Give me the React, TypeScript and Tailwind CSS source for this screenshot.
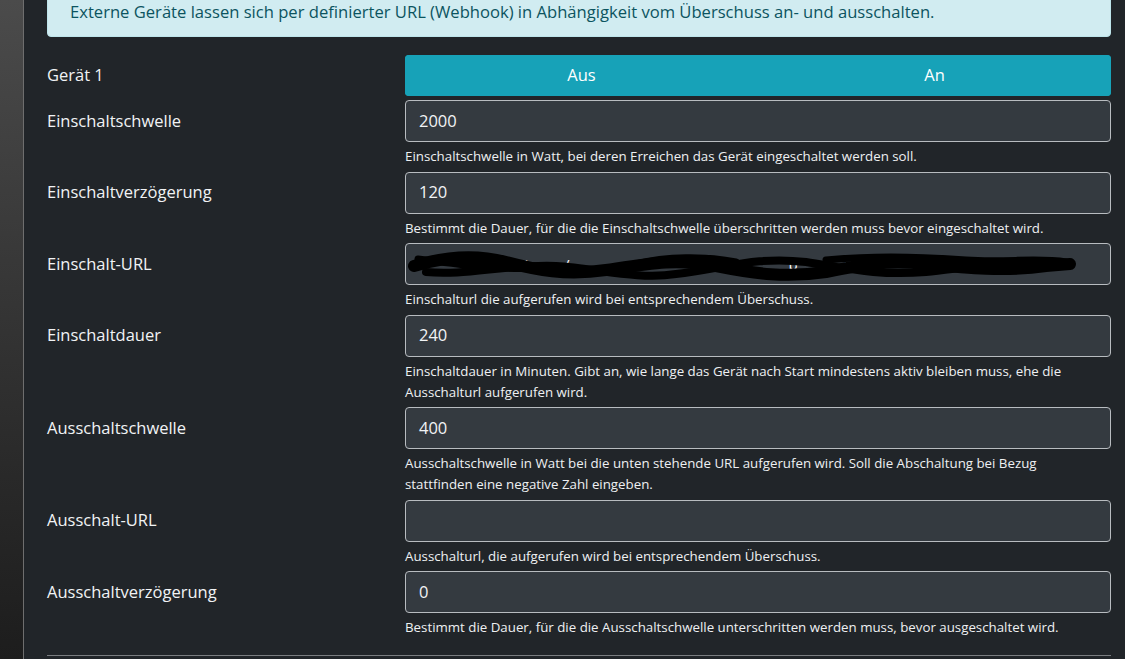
import React from 'react';

interface FieldProps {
  label: string;
  value?: string;
  help: string;
  redacted?: boolean;
}

const Scribble: React.FC = () => (
  <svg
    className="absolute left-0 top-0 pointer-events-none"
    width="700"
    height="42"
    viewBox="0 0 700 42"
  >
    <path
      d="M8 22 C40 12 70 10 100 18 C130 26 160 32 200 26 C240 20 270 14 310 22 C350 30 380 34 420 28 C460 20 480 16 520 20 C560 24 600 28 640 22 L664 20"
      fill="none"
      stroke="#000"
      strokeWidth="12"
      strokeLinecap="round"
    />
    <path
      d="M20 28 C60 32 100 20 150 22 C190 24 230 36 270 30 C320 24 350 12 400 18 C440 24 470 32 520 28 C560 24 600 16 650 20"
      fill="none"
      stroke="#000"
      strokeWidth="8"
      strokeLinecap="round"
    />
    <path
      d="M12 15 C50 20 90 26 130 24 M230 20 C260 12 300 12 330 18 M420 16 C470 11 520 13 560 16 C600 19 630 13 660 18"
      fill="none"
      stroke="#000"
      strokeWidth="7"
      strokeLinecap="round"
    />
  </svg>
);

const Field: React.FC<FieldProps> = ({ label, value, help, redacted }) => {
  return (
    <div className="grid grid-cols-[358px_1fr] mb-[4.5px]">
      <div className="h-[42px] flex items-center text-[16.5px] text-[#f1f3f5]">{label}</div>
      <div>
        <div className="relative h-[42px] rounded-[4px] border border-[#b8bcc0] bg-[#343a40] px-[13px] flex items-center text-[16.5px] text-[#f1f3f5] overflow-hidden">
          {redacted ? (
            <>
              <span className="whitespace-nowrap text-[15px] tracking-[6px] text-white">
                h&nbsp;&nbsp;&nbsp;f&nbsp;&nbsp;&nbsp;&nbsp;&nbsp;i&nbsp;&nbsp;&nbsp;/&nbsp;&nbsp;&nbsp;&nbsp;=&nbsp;&nbsp;&nbsp;&nbsp;&nbsp;&nbsp;(&nbsp;&nbsp;&nbsp;&nbsp;&nbsp;&nbsp;&nbsp;&nbsp;&nbsp;p&nbsp;&nbsp;&nbsp;&nbsp;)
              </span>
              <Scribble />
            </>
          ) : (
            value
          )}
        </div>
        <p className="mt-1 pr-[12px] text-[13.3px] leading-[21px] text-[#eef0f2]">{help}</p>
      </div>
    </div>
  );
};

const fields: FieldProps[] = [
  {
    label: 'Einschaltschwelle',
    value: '2000',
    help: 'Einschaltschwelle in Watt, bei deren Erreichen das Gerät eingeschaltet werden soll.',
  },
  {
    label: 'Einschaltverzögerung',
    value: '120',
    help: 'Bestimmt die Dauer, für die die Einschaltschwelle überschritten werden muss bevor eingeschaltet wird.',
  },
  {
    label: 'Einschalt-URL',
    redacted: true,
    help: 'Einschalturl die aufgerufen wird bei entsprechendem Überschuss.',
  },
  {
    label: 'Einschaltdauer',
    value: '240',
    help: 'Einschaltdauer in Minuten. Gibt an, wie lange das Gerät nach Start mindestens aktiv bleiben muss, ehe die Ausschalturl aufgerufen wird.',
  },
  {
    label: 'Ausschaltschwelle',
    value: '400',
    help: 'Ausschaltschwelle in Watt bei die unten stehende URL aufgerufen wird. Soll die Abschaltung bei Bezug stattfinden eine negative Zahl eingeben.',
  },
  {
    label: 'Ausschalt-URL',
    value: '',
    help: 'Ausschalturl, die aufgerufen wird bei entsprechendem Überschuss.',
  },
  {
    label: 'Ausschaltverzögerung',
    value: '0',
    help: 'Bestimmt die Dauer, für die die Ausschaltschwelle unterschritten werden muss, bevor ausgeschaltet wird.',
  },
];

export default function App() {
  return (
    <div
      className="flex h-[659px] overflow-hidden bg-[#212529]"
      style={{ fontFamily: '"Open Sans", "Noto Sans", sans-serif' }}
    >
      <div className="w-[24px] shrink-0 bg-gradient-to-b from-[#4b4b4b] to-[#1d1d1d] border-r border-[#6e6e6e]" />
      <div className="flex-1 pl-[23px] pr-[14px]">
        <div className="-mt-[13px] mb-[18px] rounded-[4px] border border-[#bee5eb] bg-[#d1ecf1] px-[22px] pt-[12px] pb-[12px] text-[16.6px] leading-[24px] text-[#0c5460]">
          Externe Geräte lassen sich per definierter URL (Webhook) in Abhängigkeit vom Überschuss an- und ausschalten.
        </div>

        <div className="grid grid-cols-[358px_1fr] mb-[4px]">
          <div className="h-[41px] flex items-center text-[16.5px] text-[#f1f3f5]">Gerät 1</div>
          <div className="flex h-[41px] rounded-[4px] overflow-hidden bg-[#17a2b8] text-[16.5px] text-white">
            <button className="flex-1 bg-[#17a2b8]">Aus</button>
            <button className="flex-1 bg-[#17a2b8]">An</button>
          </div>
        </div>

        {fields.map((f) => (
          <Field key={f.label} {...f} />
        ))}

        <hr className="mt-[17px] border-t border-[#7a7d80]" />
      </div>
    </div>
  );
}
